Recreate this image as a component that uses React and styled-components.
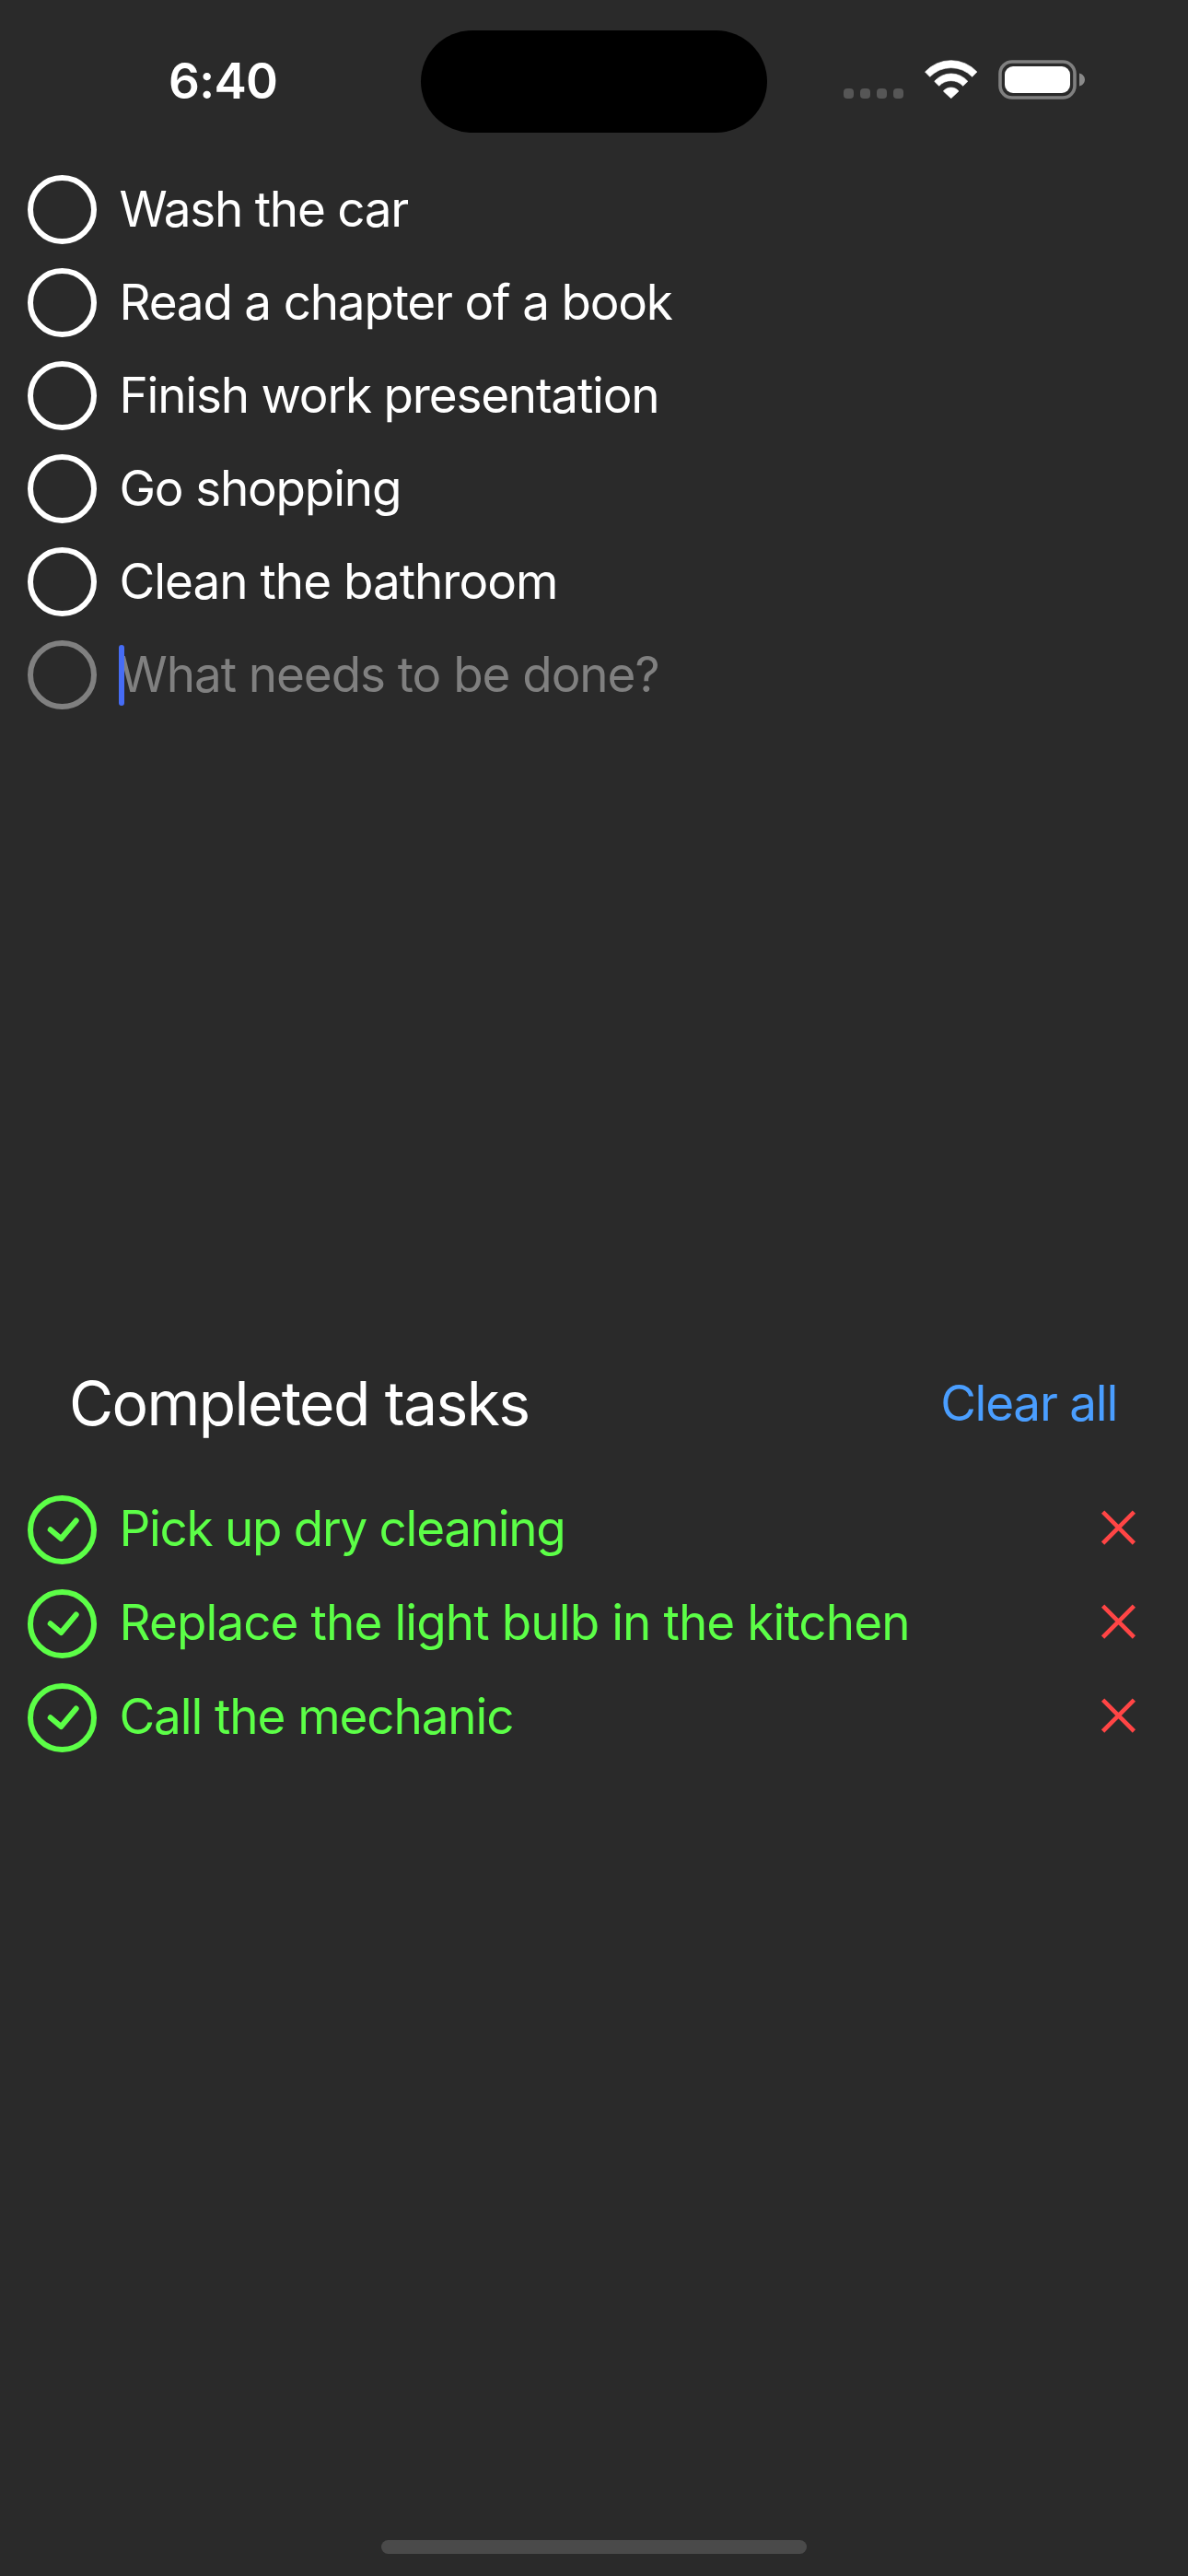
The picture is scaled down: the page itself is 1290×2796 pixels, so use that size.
import React from "react";
import styled, { createGlobalStyle } from "styled-components";

const GlobalStyle = createGlobalStyle`
  html, body { margin: 0; padding: 0; background: #2a2a2a; }
  *, *::before, *::after { box-sizing: border-box; }
`;

const Screen = styled.div`
  display: flex;
  flex-direction: column;
  width: 1290px;
  height: 2796px;
  overflow: hidden;
  background: #2a2a2a;
  color: #ffffff;
  font-family: Inter, "Liberation Sans", sans-serif;
`;

const StatusBar = styled.header`
  display: grid;
  grid-template-columns: 457px 376px 1fr;
  align-items: start;
  height: 190px;
  padding-top: 33px;
`;

const Clock = styled.time`
  padding: 23px 0 0 183px;
  font-size: 53px;
  font-weight: 600;
  line-height: 64px;
  letter-spacing: -0.7px;
`;

const Island = styled.div`
  height: 111px;
  border-radius: 56px;
  background: #000000;
`;

const Indicators = styled.div`
  display: flex;
  align-items: flex-end;
  height: 75px;
  padding-left: 83px;
`;

const SignalDots = styled.div`
  display: flex;
  gap: 7px;
  margin-bottom: 1px;
`;

const SignalDot = styled.span`
  width: 11px;
  height: 11px;
  border-radius: 4px;
  background: #565656;
`;

const WifiIcon = styled.svg`
  width: 57.4px;
  height: 42px;
  margin: 0 22.8px 1px 22.8px;
`;

const BatteryIcon = styled.svg`
  width: 94px;
  height: 43px;
`;

const ActiveTasks = styled.main`
  display: flex;
  flex-direction: column;
  gap: 26px;
  height: 1293px;
  padding: 0 30px;
`;

const CompletedTasks = styled.section`
  display: flex;
  flex: 1;
  flex-direction: column;
`;

const SectionHeader = styled.div`
  display: flex;
  align-items: center;
  justify-content: space-between;
  height: 80px;
  margin-bottom: 60px;
  padding: 0 77px 0 75px;
`;

const SectionTitle = styled.h1`
  margin: 0;
  font-size: 66px;
  font-weight: 400;
  line-height: 80px;
  letter-spacing: -1.62px;
`;

const ClearButton = styled.button`
  padding: 0;
  border: 0;
  background: none;
  color: #4a9eff;
  font: 400 53px/64px Inter, "Liberation Sans", sans-serif;
  letter-spacing: -1.24px;
`;

const CompletedList = styled.div`
  display: flex;
  flex-direction: column;
  gap: 27px;
  padding: 0 56px 0 30px;
`;

const tones = { active: "#ffffff", draft: "#808080", done: "#5cff47" };

const TaskRow = styled.div`
  display: flex;
  height: 75px;
  color: ${({ $tone }) => tones[$tone]};
`;

const Checkbox = styled.span`
  display: flex;
  align-items: center;
  justify-content: center;
  width: 75px;
  height: 75px;
  margin-right: 24px;
  border: 6px solid currentColor;
  border-radius: 50%;
`;

const CheckIcon = styled.svg`
  width: 63px;
  height: 63px;
`;

const TaskText = styled.span`
  position: relative;
  flex: 1;
  margin-top: ${({ $done }) => ($done ? 4 : 5)}px;
  font-size: 53px;
  line-height: 64px;
  letter-spacing: ${({ $tracking }) => $tracking}px;
  text-indent: 0.5px;
  white-space: nowrap;
`;

const Caret = styled.span`
  position: absolute;
  top: 0;
  left: 0;
  width: 6px;
  height: 66px;
  border-radius: 3px;
  background: #466cf5;
`;

const DeleteIcon = styled.svg`
  width: 38px;
  height: 38px;
  margin-top: 16px;
`;

const HomeIndicator = styled.div`
  width: 462px;
  height: 15px;
  margin: 0 auto 24px;
  border-radius: 8px;
  background: #4a4a4a;
`;

const active = [
  { text: "Wash the car", tracking: -1.25 },
  { text: "Read a chapter of a book", tracking: -1.2 },
  { text: "Finish work presentation", tracking: -1.2 },
  { text: "Go shopping", tracking: -1.2 },
  { text: "Clean the bathroom", tracking: -1.0 },
];

const completed = [
  { text: "Pick up dry cleaning", tracking: -1.29 },
  { text: "Replace the light bulb in the kitchen", tracking: -0.91 },
  { text: "Call the mechanic", tracking: -1.1 },
];

function Wifi() {
  return (
    <WifiIcon viewBox="371 105 172 126" fill="#fff" stroke="#fff" strokeWidth="2" strokeLinejoin="round">
      <path d="M372.500 144A115 115 0 0 1 541.500 144L526 160A96 96 0 0 0 388 160Z" />
      <path d="M403 175A71 71 0 0 1 511.500 175L496 190A53 53 0 0 0 418 190Z" />
      <path d="M432 207A32 32 0 0 1 482 207L457 230Z" />
    </WifiIcon>
  );
}

function Battery() {
  return (
    <BatteryIcon viewBox="0 0 94 43">
      <rect x="2" y="2" width="81" height="39" rx="13" fill="none" stroke="#808080" strokeWidth="3.6" />
      <rect x="7" y="7" width="71" height="29" rx="9" fill="#fff" />
      <path d="M88 14.500C91.800 15.500 94 18.500 94 21.500C94 24.500 91.800 27.500 88 28.500Z" fill="#8a8a8a" />
    </BatteryIcon>
  );
}

export default function App() {
  return (
    <>
      <GlobalStyle />
      <Screen>
        <StatusBar>
          <Clock>6:40</Clock>
          <Island />
          <Indicators>
            <SignalDots>
              <SignalDot />
              <SignalDot />
              <SignalDot />
              <SignalDot />
            </SignalDots>
            <Wifi />
            <Battery />
          </Indicators>
        </StatusBar>

        <ActiveTasks>
          {active.map((task) => (
            <TaskRow key={task.text} $tone="active">
              <Checkbox />
              <TaskText $tracking={task.tracking}>{task.text}</TaskText>
            </TaskRow>
          ))}
          <TaskRow $tone="draft">
            <Checkbox />
            <TaskText $tracking={-1.06}>
              What needs to be done?
              <Caret />
            </TaskText>
          </TaskRow>
        </ActiveTasks>

        <CompletedTasks>
          <SectionHeader>
            <SectionTitle>Completed tasks</SectionTitle>
            <ClearButton>Clear all</ClearButton>
          </SectionHeader>
          <CompletedList>
            {completed.map((task) => (
              <TaskRow key={task.text} $tone="done">
                <Checkbox>
                  <CheckIcon viewBox="0 0 63 63" fill="none" stroke="currentColor" strokeWidth="6" strokeLinecap="round" strokeLinejoin="round">
                    <path d="M18.700 31.300L30.300 41L46.700 21.500" />
                  </CheckIcon>
                </Checkbox>
                <TaskText $done $tracking={task.tracking}>{task.text}</TaskText>
                <DeleteIcon viewBox="0 0 38 38" stroke="#ff4545" strokeWidth="4.6">
                  <path d="M1.600 2.200L35.400 36M35.400 2.200L1.600 36" />
                </DeleteIcon>
              </TaskRow>
            ))}
          </CompletedList>
        </CompletedTasks>

        <HomeIndicator />
      </Screen>
    </>
  );
}
